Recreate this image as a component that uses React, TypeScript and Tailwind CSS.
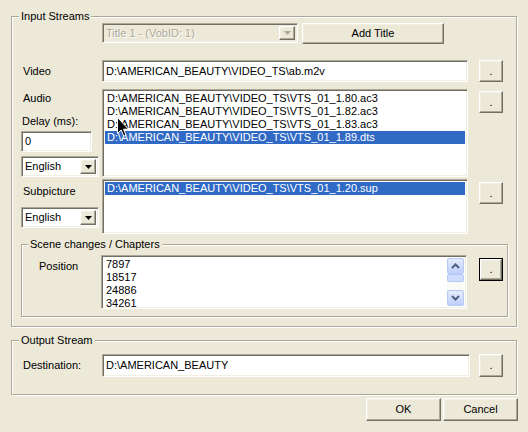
import React from "react";

const raised =
  "bg-[#ECE9D8] border border-t-white border-l-white border-r-[#716F64] border-b-[#716F64] shadow-[inset_-1px_-1px_0_#ACA899,inset_1px_1px_0_#F1EFE2]";
const sunken =
  "border border-t-[#ACA899] border-l-[#ACA899] border-r-white border-b-white shadow-[inset_1px_1px_0_#716F64,inset_-1px_-1px_0_#F1EFE2]";

const Btn = ({ label, className }: { label: string; className: string }) => (
  <button className={`${raised} ${className} flex items-center justify-center leading-[13px] p-0`}>{label}</button>
);

const DotBtn = ({ className }: { className: string }) => (
  <button className={`${raised} ${className} flex items-center justify-center p-0 leading-[13px] shrink-0`}>.</button>
);

const Arrow = ({ color }: { color: string }) => (
  <svg width="7" height="4" viewBox="0 0 7 4">
    <path d="M0 0h7l-3.5 4z" fill={color} />
  </svg>
);

const Combo = ({ text, className, disabled }: { text: string; className: string; disabled?: boolean }) => (
  <div
    className={`${sunken} ${className} flex items-stretch p-[2px] ${disabled ? "bg-[#ECE9D8]" : "bg-white"}`}
  >
    <div
      className={`flex-1 flex items-center pl-[1px] ${
        disabled ? "text-[#ACA899] [text-shadow:1px_1px_0_#fff]" : "text-black"
      }`}
    >
      {text}
    </div>
    <div className={`${raised} w-[16px] flex items-center justify-center`}>
      <Arrow color={disabled ? "#ACA899" : "#000"} />
    </div>
  </div>
);

const Row = ({ text, selected }: { text: string; selected?: boolean }) => (
  <div className={`h-[13px] leading-[13px] pl-[2px] whitespace-nowrap ${selected ? "bg-[#316AC5] text-white" : ""}`}>
    {text}
  </div>
);

const Chevron = ({ up }: { up?: boolean }) => (
  <svg width="9" height="6" viewBox="0 0 9 6">
    <path d={up ? "M1 5l3.5-3.5L8 5" : "M1 1l3.5 3.5L8 1"} fill="none" stroke="#4D6185" strokeWidth="2" />
  </svg>
);

const ScrollBtn = ({ up }: { up?: boolean }) => (
  <div className="h-[17px] rounded-[2px] border border-[#B7CAF5] bg-gradient-to-b from-[#E4ECFD] to-[#BED0FA] flex items-center justify-center">
    <Chevron up={up} />
  </div>
);

const Group = ({
  title,
  className,
  legendClass,
  children,
}: {
  title: string;
  className: string;
  legendClass: string;
  children: React.ReactNode;
}) => (
  <fieldset
    className={`m-0 p-0 min-w-0 border border-[#ACA899] shadow-[inset_1px_1px_0_#fff,1px_1px_0_#fff] ${className}`}
  >
    <legend className={`${legendClass} px-[2px] h-[13px] leading-[13px] bg-[#ECE9D8]`}>{title}</legend>
    {children}
  </fieldset>
);

export default function App() {
  const base = "D:\\AMERICAN_BEAUTY\\VIDEO_TS\\";
  return (
    <div className="relative w-[528px] h-[432px] overflow-hidden bg-[#ECE9D8] pt-[10px] pl-[11px] flex flex-col items-start font-['Liberation_Sans',Arial,sans-serif] text-[11px] leading-[13px] text-black">
      <Group title="Input Streams" className="w-[506px] pb-[9px]" legendClass="ml-[7px]">
        <div className="flex gap-[4px] ml-[90px] h-[21px]">
          <Combo text="Title 1 - (VobID: 1)" className="w-[196px] h-[20px]" disabled />
          <Btn label="Add Title" className="w-[142px] h-[21px]" />
        </div>

        <div className="flex items-center mt-[16px] h-[22px]">
          <div className="w-[90px] pl-[11px]">Video</div>
          <div className={`${sunken} w-[366px] h-[22px] bg-white flex items-center pl-[3px] whitespace-nowrap`}>
            {base}ab.m2v
          </div>
          <DotBtn className="ml-[11px] w-[24px] h-[22px]" />
        </div>

        <div className="flex items-start mt-[7px]">
          <div className="w-[90px] flex flex-col">
            <div className="mt-[3px] pl-[11px]">Audio</div>
            <div className="mt-[10px] pl-[10px]">Delay (ms):</div>
            <div className={`${sunken} mt-[3px] ml-[9px] w-[71px] h-[21px] bg-white flex items-center pl-[3px]`}>0</div>
            <Combo text="English" className="mt-[4px] ml-[9px] w-[78px] h-[21px]" />
          </div>
          <div className={`${sunken} w-[366px] h-[88px] bg-white p-[2px] overflow-hidden`}>
            <Row text={`${base}VTS_01_1.80.ac3`} />
            <Row text={`${base}VTS_01_1.82.ac3`} />
            <Row text={`${base}VTS_01_1.83.ac3`} />
            <Row text={`${base}VTS_01_1.89.dts`} selected />
          </div>
          <DotBtn className="ml-[11px] mt-[2px] w-[24px] h-[22px]" />
        </div>

        <div className="flex items-start mt-[2px]">
          <div className="w-[90px] flex flex-col">
            <div className="mt-[6px] pl-[11px]">Subpicture</div>
            <Combo text="English" className="mt-[9px] ml-[9px] w-[78px] h-[21px]" />
          </div>
          <div className={`${sunken} w-[366px] h-[55px] bg-white p-[2px] overflow-hidden`}>
            <Row text={`${base}VTS_01_1.20.sup`} selected />
          </div>
          <DotBtn className="ml-[11px] mt-[3px] w-[24px] h-[22px]" />
        </div>

        <Group title="Scene changes / Chapters" className="mt-[4px] ml-[9px] w-[487px] pb-[7px]" legendClass="ml-[6px]">
          <div className="flex items-start mt-[4px]">
            <div className="w-[79px] pl-[17px] mt-[5px]">Position</div>
            <div className={`${sunken} w-[366px] h-[54px] bg-white p-[2px] flex`}>
              <div className="flex-1">
                <Row text="7897" />
                <Row text="18517" />
                <Row text="24886" />
                <Row text="34261" />
              </div>
              <div className="w-[17px] flex flex-col bg-[#FAFAF6]">
                <ScrollBtn up />
                <div className="h-[8px] rounded-[2px] border border-[#B7CAF5] bg-[#CFDCFB]" />
                <div className="h-[8px]" />
                <ScrollBtn />
              </div>
            </div>
            <div className="ml-[12px] mt-[3px] w-[24px] h-[23px] border border-black flex">
              <DotBtn className="flex-1" />
            </div>
          </div>
        </Group>
      </Group>

      <Group title="Output Stream" className="mt-[7px] w-[506px] pb-[17px]" legendClass="ml-[7px]">
        <div className="flex items-center mt-[7px] h-[23px]">
          <div className="w-[90px] pl-[11px]">Destination:</div>
          <div className={`${sunken} w-[368px] h-[23px] bg-white flex items-center pl-[3px]`}>
            D:\AMERICAN_BEAUTY
          </div>
          <DotBtn className="ml-[9px] w-[24px] h-[23px]" />
        </div>
      </Group>

      <div className="flex gap-[2px] mt-[3px] ml-[355px]">
        <Btn label="OK" className="w-[75px] h-[23px]" />
        <Btn label="Cancel" className="w-[75px] h-[23px]" />
      </div>

      <svg className="absolute left-[117px] top-[117px]" width="12" height="21" viewBox="0 0 12 21">
        <path
          d="M0.5 0.5V16.5L4.2 13L6.8 19.2L9 18.2L6.5 12.2H11.5Z"
          fill="#000"
          stroke="#fff"
          strokeWidth="1"
          strokeLinejoin="miter"
        />
      </svg>
    </div>
  );
}
